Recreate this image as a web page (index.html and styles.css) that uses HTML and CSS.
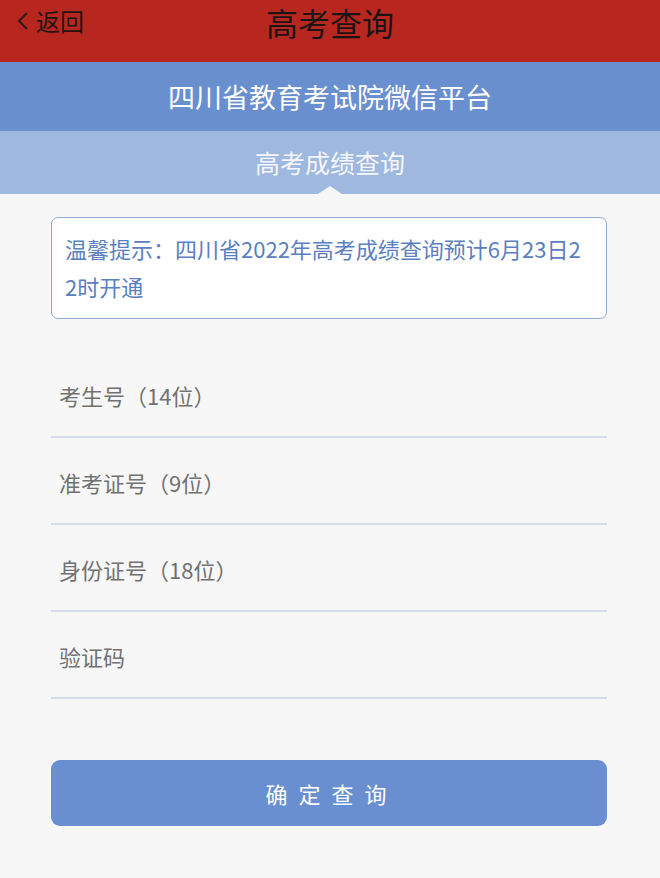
FILE: index.html
```html
<!DOCTYPE html>
<html lang="zh-CN">
<head>
<meta charset="utf-8">
<title>高考查询</title>
<link rel="stylesheet" href="styles.css">
</head>
<body>
<header class="topbar">
  <a class="back">
    <svg class="chev" width="14" height="20" viewBox="0 0 14 20"><polyline points="11,2 3,10 11,18" fill="none" stroke="#2a1a1a" stroke-width="2"/></svg>
    <span>返回</span>
  </a>
  <h1 class="title">高考查询</h1>
</header>
<div class="band-main">四川省教育考试院微信平台</div>
<div class="band-sub">高考成绩查询</div>
<main class="content">
  <div class="notice">温馨提示：四川省2022年高考成绩查询预计6月23日22时开通</div>
  <form class="form">
    <div class="row"><span class="label">考生号（14位）</span></div>
    <div class="row"><span class="label">准考证号（9位）</span></div>
    <div class="row"><span class="label">身份证号（18位）</span></div>
    <div class="row"><span class="label">验证码</span></div>
    <button type="button" class="submit">确定查询</button>
  </form>
</main>
</body>
</html>
```
FILE: styles.css
```css
* { box-sizing: border-box; }
html, body { margin: 0; padding: 0; }
body {
  background: #f7f7f7;
  font-family: "Noto Sans CJK SC", "Noto Sans", sans-serif;
  width: 660px;
  min-height: 878px;
}
.topbar {
  position: relative;
  height: 62px;
  background: #b8271f;
  display: flex;
  justify-content: center;
}
.back {
  position: absolute;
  left: 16px;
  top: 4px;
  display: flex;
  align-items: center;
  gap: 6px;
  color: #231414;
  font-size: 24px;
  line-height: 34px;
}
.chev { display: block; }
.title {
  margin: 0;
  font-size: 32px;
  font-weight: 400;
  line-height: 44px;
  color: #1c1414;
}
.band-main {
  height: 69px;
  background: #6a8fcf;
  color: #fff;
  font-size: 27px;
  line-height: 69px;
  text-align: center;
}
.band-sub {
  position: relative;
  height: 63px;
  background: #9fb8df;
  color: #f5f7fc;
  font-size: 25px;
  line-height: 62px;
  text-align: center;
}
.band-sub::after {
  content: "";
  position: absolute;
  left: 318px;
  bottom: 0;
  border-left: 12px solid transparent;
  border-right: 12px solid transparent;
  border-bottom: 8px solid #f7f7f7;
}
.content {
  padding: 23px 53px 0 51px;
}
.notice {
  width: 556px;
  background: #fff;
  border: 1.5px solid #8ea7d2;
  border-radius: 7px;
  padding: 11px 20px 13px 13px;
  color: #5b80c0;
  font-size: 22px;
  line-height: 38px;
  word-break: break-all;
}
.form {
  margin-top: 32px;
  width: 556px;
  display: flex;
  flex-direction: column;
}
.row {
  height: 87px;
  border-bottom: 2px solid #d6dcea;
  padding: 23px 0 0 8px;
}
.label {
  font-size: 22px;
  line-height: 42px;
  color: #717171;
}
.submit {
  margin-top: 61px;
  height: 66px;
  width: 556px;
  border: none;
  border-radius: 9px;
  background: #6a8fd0;
  color: #fff;
  font-family: inherit;
  font-size: 22px;
  letter-spacing: 11px;
  padding-left: 11px;
}
```
